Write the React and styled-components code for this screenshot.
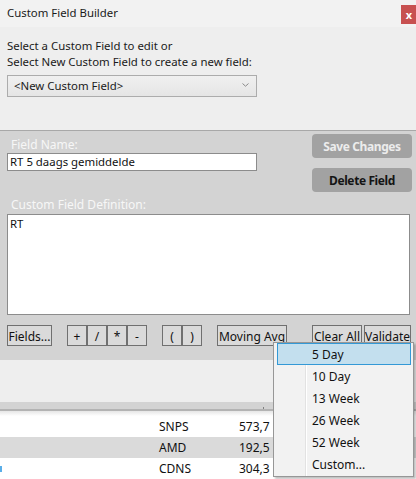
import React from 'react'
import styled, { createGlobalStyle } from 'styled-components'

const GlobalStyle = createGlobalStyle`
    html, body {
        margin: 0;
        padding: 0;
        background: #eeeeee;
    }
    body {
        font-family: "Noto Sans", "Open Sans", sans-serif;
        font-size: 11.4px;
        color: #111;
    }
`

const rows = [
    { sym: 'SNPS', price: '573,7', shade: false },
    { sym: 'AMD', price: '192,5', shade: true },
    { sym: 'CDNS', price: '304,3', shade: false, mark: true },
]

const menuItems = ['5 Day', '10 Day', '13 Week', '26 Week', '52 Week', 'Custom...']

function App() {
    return (
        <Page>
            <GlobalStyle />
            <Dialog>
                <TitleBar>
                    <span>Custom Field Builder</span>
                    <CloseBtn>x</CloseBtn>
                </TitleBar>
                <TopSection>
                    <Prompt>
                        Select a Custom Field to edit or<br />
                        Select New Custom Field to create a new field:
                    </Prompt>
                    <Combo>
                        <span>&lt;New Custom Field&gt;</span>
                        <Chevron viewBox="0 0 7 4" width="7" height="4">
                            <path d="M0.5 0.5 L3.5 3.2 L6.5 0.5" fill="none" stroke="#8a8a8a" strokeWidth="1" />
                        </Chevron>
                    </Combo>
                </TopSection>
                <EditSection>
                    <NameRow>
                        <NameCol>
                            <Label>Field Name:</Label>
                            <TextInput>RT 5 daags gemiddelde</TextInput>
                        </NameCol>
                        <ActionCol>
                            <ActionBtn $light>Save Changes</ActionBtn>
                            <ActionBtn>Delete Field</ActionBtn>
                        </ActionCol>
                    </NameRow>
                    <Label $def>Custom Field Definition:</Label>
                    <DefBox>RT</DefBox>
                    <ToolRow>
                        <ToolBtn $w={45}>Fields...</ToolBtn>
                        <Group $gap={15}>
                            <ToolBtn $w={20}>+</ToolBtn>
                            <ToolBtn $w={20}>/</ToolBtn>
                            <ToolBtn $w={20}>*</ToolBtn>
                            <ToolBtn $w={20}>-</ToolBtn>
                        </Group>
                        <Group $gap={15}>
                            <ToolBtn $w={20}>(</ToolBtn>
                            <ToolBtn $w={20}>)</ToolBtn>
                        </Group>
                        <Group $gap={15}>
                            <ToolBtn $w={70}>Moving Avg</ToolBtn>
                        </Group>
                        <Group $gap={25}>
                            <ToolBtn $w={50}>Clear All</ToolBtn>
                        </Group>
                        <Group $gap={2}>
                            <ToolBtn $w={47}>Validate</ToolBtn>
                        </Group>
                    </ToolRow>
                </EditSection>
            </Dialog>

            <Backdrop>
                <LightStrip />
                <GridHeader>
                    <Tick />
                </GridHeader>
                <Shadow />
                {rows.map((r) => (
                    <Row key={r.sym} $shade={r.shade}>
                        {r.mark && <Mark />}
                        <Sym>{r.sym}</Sym>
                        <Price>{r.price}</Price>
                    </Row>
                ))}
            </Backdrop>

            <Menu>
                <MenuRail />
                {menuItems.map((item, i) => (
                    <MenuItem key={item} $active={i === 0}>{item}</MenuItem>
                ))}
            </Menu>
        </Page>
    )
}

const Page = styled.div`
    position: relative;
    width: 416px;
    height: 479px;
    overflow: hidden;
    background: #eeeeee;
`

const Dialog = styled.div`
    display: flex;
    flex-direction: column;
`

const TitleBar = styled.div`
    height: 27px;
    background: #f2f2f2;
    display: flex;
    align-items: center;
    justify-content: space-between;
    padding-left: 7px;
    color: #1a1a1a;
    span{
        margin-top: -2px;
    }
`

const CloseBtn = styled.div`
    width: 14px;
    height: 19px;
    margin-top: 2px;
    background: #c75050;
    color: #fff;
    font-weight: 700;
    font-size: 11px;
    display: flex;
    align-items: center;
    justify-content: center;
    padding-left: 1px;
`

const TopSection = styled.div`
    height: 104px;
    background: #eeeeee;
    border-bottom: 1px solid #a8a8a8;
    padding: 11px 7px 0;
    box-sizing: border-box;
`

const Prompt = styled.div`
    line-height: 16px;
    color: #1a1a1a;
`

const Combo = styled.div`
    margin-top: 5px;
    width: 250px;
    height: 22px;
    box-sizing: border-box;
    border: 1px solid #acacac;
    background: linear-gradient(#f0f0f0, #e5e5e5);
    display: flex;
    align-items: center;
    justify-content: space-between;
    padding: 0 7px 0 6px;
    color: #1a1a1a;
    span{
        margin-top: -1px;
    }
`

const Chevron = styled.svg`
    margin-top: -2px;
`

const EditSection = styled.div`
    height: 229px;
    background: #d3d3d3;
    padding: 2px 4px 0 7px;
    box-sizing: border-box;
    display: flex;
    flex-direction: column;
`

const NameRow = styled.div`
    display: flex;
    justify-content: space-between;
`

const NameCol = styled.div`
    display: flex;
    flex-direction: column;
`

const Label = styled.div`
    color: #f7f7f7;
    font-size: 12px;
    line-height: 16px;
    padding-left: 4px;
    margin-top: ${props => props.$def ? '4px' : '0'};
    height: ${props => props.$def ? '17px' : '20px'};
    display: flex;
    align-items: ${props => props.$def ? 'center' : 'flex-end'};
`

const TextInput = styled.div`
    width: 250px;
    height: 18px;
    box-sizing: border-box;
    border: 1px solid #8c8c8c;
    background: #fff;
    padding-left: 2px;
    line-height: 15px;
    color: #111;
`

const ActionCol = styled.div`
    display: flex;
    flex-direction: column;
    gap: 10px;
    padding-top: 1px;
`

const ActionBtn = styled.div`
    width: 100px;
    height: 24px;
    border-radius: 4px;
    background: #a2a2a2;
    color: ${props => props.$light ? '#ececec' : '#141414'};
    font-weight: 700;
    font-size: 12px;
    letter-spacing: -0.4px;
    display: flex;
    align-items: center;
    justify-content: center;
`

const DefBox = styled.div`
    margin-top: 1px;
    width: 403px;
    height: 101px;
    box-sizing: border-box;
    border: 1px solid #8c8c8c;
    background: #fff;
    padding: 0 2px;
    line-height: 18px;
`

const ToolRow = styled.div`
    display: flex;
    margin-top: 10px;
`

const Group = styled.div`
    display: flex;
    margin-left: ${props => props.$gap}px;
`

const ToolBtn = styled.div`
    width: ${props => props.$w}px;
    height: 21px;
    box-sizing: border-box;
    border: 1px solid #707070;
    background: #dadada;
    display: flex;
    align-items: center;
    justify-content: center;
    padding-top: 2px;
    font-size: 12px;
    white-space: nowrap;
    overflow: hidden;
`

const Backdrop = styled.div`
    display: flex;
    flex-direction: column;
`

const LightStrip = styled.div`
    height: 42px;
    background: #eeeeee;
`

const GridHeader = styled.div`
    position: relative;
    height: 7px;
    background: #d3d3d3;
    border-bottom: 2px solid #b3b3b3;
`

const Tick = styled.div`
    position: absolute;
    left: 263px;
    bottom: 0;
    width: 1px;
    height: 2px;
    background: #808080;
`

const Shadow = styled.div`
    height: 5px;
    background: linear-gradient(#e6e6e6, #ffffff);
`

const Row = styled.div`
    position: relative;
    height: 21px;
    background: ${props => props.$shade ? '#dadada' : '#ffffff'};
    display: flex;
    align-items: center;
    font-size: 12px;
    color: #111;
`

const Mark = styled.div`
    position: absolute;
    left: 0;
    top: 8px;
    width: 2px;
    height: 6px;
    background: #5aaee8;
`

const Sym = styled.div`
    margin-left: 159px;
    width: 80px;
`

const Price = styled.div``

const Menu = styled.div`
    position: absolute;
    left: 273px;
    top: 342px;
    width: 141px;
    height: 135px;
    box-sizing: border-box;
    border: 1px solid #979797;
    background: #f2f2f2;
    box-shadow: 2px 2px 2px rgba(0, 0, 0, 0.25);
    padding: 0 2px 0 3px;
`

const MenuRail = styled.div`
    position: absolute;
    left: 31px;
    top: 0;
    bottom: 0;
    width: 1px;
    background: #e2e2e2;
    border-right: 1px solid #ffffff;
`

const MenuItem = styled.div`
    position: relative;
    height: 22px;
    box-sizing: border-box;
    border: 1px solid ${props => props.$active ? '#3399d6' : 'transparent'};
    background: ${props => props.$active ? '#c3dfee' : 'transparent'};
    padding-left: 34px;
    display: flex;
    align-items: center;
    font-size: 12px;
    color: #111;
`

export default App
